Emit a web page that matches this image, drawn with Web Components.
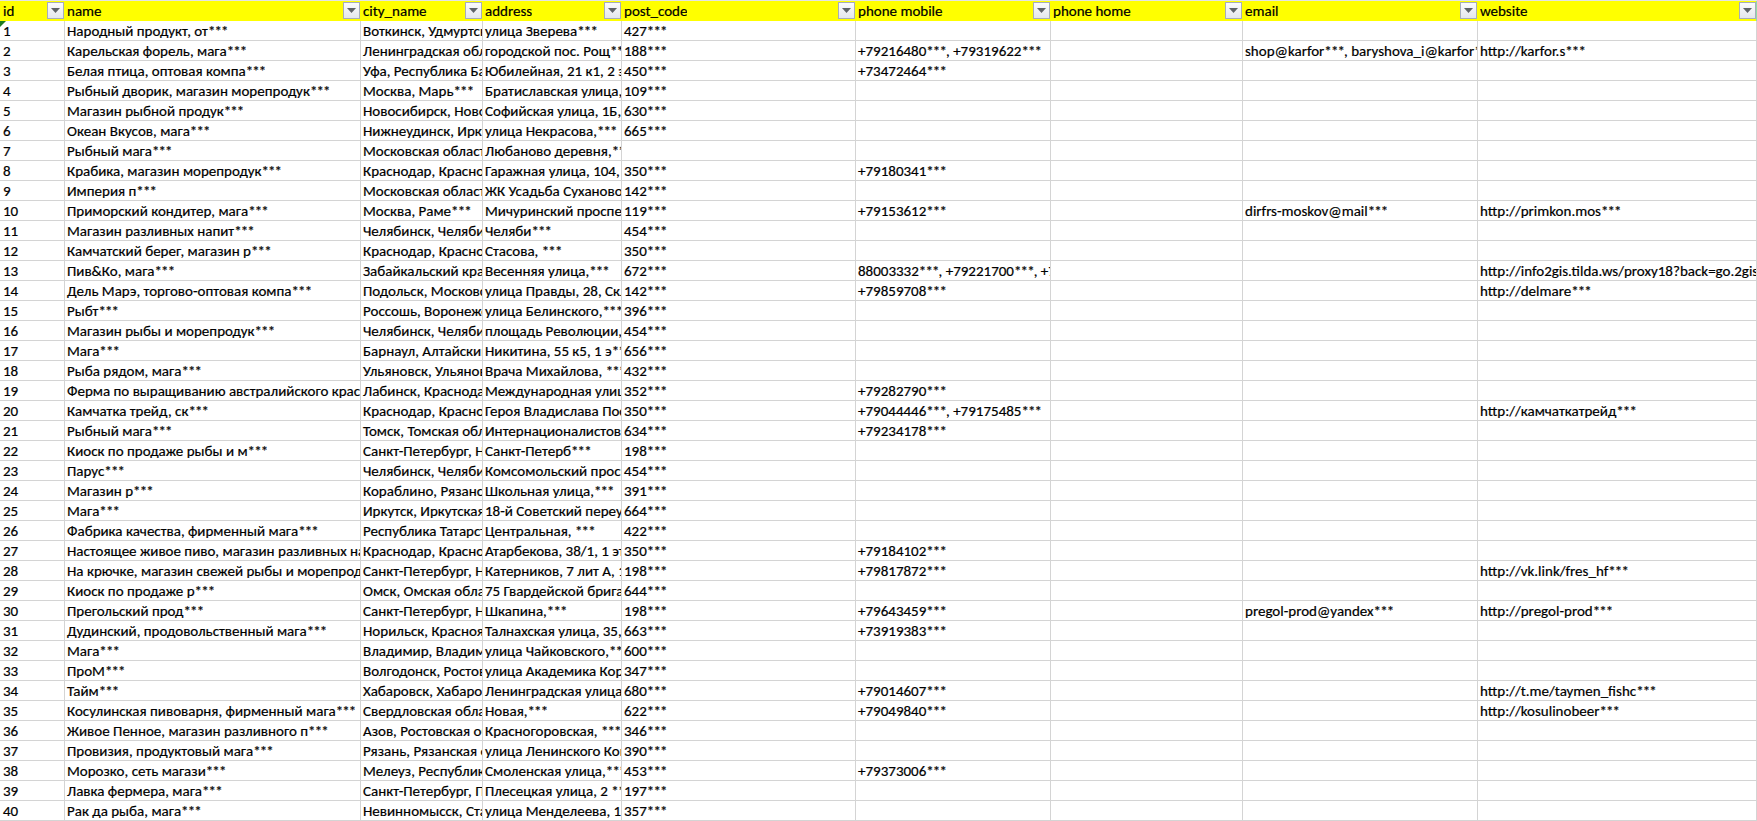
<!doctype html>
<html lang="ru">
<head>
<meta charset="utf-8">
<title>Sheet</title>
<style>
  html, body { margin: 0; height: 100%; overflow: hidden; background: #fff; }
  x-sheet { --cols: 65px 296px 122px 139px 234px 195px 192px 235px 1fr; }
  /* carlito's asterisks run wider than the ones in the screenshot */
  .mask { letter-spacing: -0.9px; }
</style>
</head>
<body>
<x-sheet></x-sheet>
<script>
const HEADERS = ['id', 'name', 'city_name', 'address', 'post_code', 'phone mobile', 'phone home', 'email', 'website'];

const ROWS = [
  ['Народный продукт, от***', 'Воткинск, Удмуртская', 'улица Зверева***', '427***'],
  ['Карельская форель, мага***', 'Ленинградская область', 'городской пос. Рощ***', '188***', '+79216480***, +79319622***', '', 'shop@karfor***, baryshova_i@karfor***', 'http://karfor.s***'],
  ['Белая птица, оптовая компа***', 'Уфа, Республика Башкортостан', 'Юбилейная, 21 к1, 2 этаж', '450***', '+73472464***'],
  ['Рыбный дворик, магазин морепродук***', 'Москва, Марь***', 'Братиславская улица,', '109***'],
  ['Магазин рыбной продук***', 'Новосибирск, Новосибирская', 'Софийская улица, 1Б,', '630***'],
  ['Океан Вкусов, мага***', 'Нижнеудинск, Иркутская', 'улица Некрасова,***', '665***'],
  ['Рыбный мага***', 'Московская область', 'Любаново деревня,***', ''],
  ['Крабика, магазин морепродук***', 'Краснодар, Краснодарский', 'Гаражная улица, 104,', '350***', '+79180341***'],
  ['Империя п***', 'Московская область', 'ЖК Усадьба Суханово', '142***'],
  ['Приморский кондитер, мага***', 'Москва, Раме***', 'Мичуринский проспект', '119***', '+79153612***', '', 'dirfrs-moskov@mail***', 'http://primkon.mos***'],
  ['Магазин разливных напит***', 'Челябинск, Челябинская', 'Челяби***', '454***'],
  ['Камчатский берег, магазин р***', 'Краснодар, Краснодарский', 'Стасова, ***', '350***'],
  ['Пив&Ко, мага***', 'Забайкальский край', 'Весенняя улица,***', '672***', '88003332***, +79221700***, +73***', '', '', 'http://info2gis.tilda.ws/proxy18?back=go.2gis.com'],
  ['Дель Марэ, торгово-оптовая компа***', 'Подольск, Московская', 'улица Правды, 28, Склад', '142***', '+79859708***', '', '', 'http://delmare***'],
  ['Рыбт***', 'Россошь, Воронежская', 'улица Белинского,***', '396***'],
  ['Магазин рыбы и морепродук***', 'Челябинск, Челябинская', 'площадь Революции,', '454***'],
  ['Мага***', 'Барнаул, Алтайский', 'Никитина, 55 к5, 1 э***', '656***'],
  ['Рыба рядом, мага***', 'Ульяновск, Ульяновская', 'Врача Михайлова, ***', '432***'],
  ['Ферма по выращиванию австралийского красного', 'Лабинск, Краснодарский', 'Международная улица', '352***', '+79282790***'],
  ['Камчатка трейд, ск***', 'Краснодар, Краснодарский', 'Героя Владислава Посадского', '350***', '+79044446***, +79175485***', '', '', 'http://камчаткатрейд***'],
  ['Рыбный мага***', 'Томск, Томская область', 'Интернационалистов', '634***', '+79234178***'],
  ['Киоск по продаже рыбы и м***', 'Санкт-Петербург, Невский', 'Санкт-Петерб***', '198***'],
  ['Парус***', 'Челябинск, Челябинская', 'Комсомольский проспект', '454***'],
  ['Магазин р***', 'Кораблино, Рязанская', 'Школьная улица,***', '391***'],
  ['Мага***', 'Иркутск, Иркутская', '18-й Советский переулок', '664***'],
  ['Фабрика качества, фирменный мага***', 'Республика Татарстан', 'Центральная, ***', '422***'],
  ['Настоящее живое пиво, магазин разливных напитков', 'Краснодар, Краснодарский', 'Атарбекова, 38/1, 1 этаж', '350***', '+79184102***'],
  ['На крючке, магазин свежей рыбы и морепродуктов', 'Санкт-Петербург, Невский', 'Катерников, 7 лит А, 1', '198***', '+79817872***', '', '', 'http://vk.link/fres_hf***'],
  ['Киоск по продаже р***', 'Омск, Омская область', '75 Гвардейской бригады', '644***'],
  ['Прегольский прод***', 'Санкт-Петербург, Невский', 'Шкапина,***', '198***', '+79643459***', '', 'pregol-prod@yandex***', 'http://pregol-prod***'],
  ['Дудинский, продовольственный мага***', 'Норильск, Красноярский', 'Талнахская улица, 35,', '663***', '+73919383***'],
  ['Мага***', 'Владимир, Владимирская', 'улица Чайковского,***', '600***'],
  ['ПроМ***', 'Волгодонск, Ростовская', 'улица Академика Королева', '347***'],
  ['Тайм***', 'Хабаровск, Хабаровский', 'Ленинградская улица', '680***', '+79014607***', '', '', 'http://t.me/taymen_fishc***'],
  ['Косулинская пивоварня, фирменный мага***', 'Свердловская область', 'Новая,***', '622***', '+79049840***', '', '', 'http://kosulinobeer***'],
  ['Живое Пенное, магазин разливного п***', 'Азов, Ростовская область', 'Красногоровская, ***', '346***'],
  ['Провизия, продуктовый мага***', 'Рязань, Рязанская область', 'улица Ленинского Комсомола', '390***'],
  ['Морозко, сеть магази***', 'Мелеуз, Республика', 'Смоленская улица,***', '453***', '+79373006***'],
  ['Лавка фермера, мага***', 'Санкт-Петербург, Пушкин', 'Плесецкая улица, 2 ***', '197***'],
  ['Рак да рыба, мага***', 'Невинномысск, Ставропольский', 'улица Менделеева, 1', '357***'],
];

class XFilter extends HTMLElement {
  constructor() {
    super();
    this.attachShadow({ mode: 'open' });
    this.shadowRoot.innerHTML = `
      <style>
        :host {
          display: block;
          box-sizing: border-box;
          flex: none;
          width: 17px;
          height: 17px;
          border: 1px solid #a6adba;
          background: linear-gradient(#fbfbfc, #e4e7ec);
        }
        svg { display: block; margin: 5px 0 0 3px; }
      </style>
      <svg width="9" height="5" viewBox="0 0 9 5"><path d="M0 0h9L4.5 5z" fill="#5f6368"/></svg>
    `;
  }
}

class XHeadCell extends HTMLElement {
  constructor() {
    super();
    this.attachShadow({ mode: 'open' });
    this.shadowRoot.innerHTML = `
      <style>
        :host {
          display: flex;
          align-items: center;
          justify-content: space-between;
          min-width: 0;
          height: 20px;
          padding: 0 1px 1px 2px;
          box-sizing: border-box;
          background: #ffff00;
        }
        :host(:first-child) { padding-left: 3px; }
        :host(:last-child) { padding-right: 0; border-right: 1px solid #8fdca8; }
        .label { padding-top: 1px; line-height: 19px; white-space: nowrap; overflow: hidden; }
      </style>
      <span class="label"><slot></slot></span>
      <x-filter></x-filter>
    `;
  }
}

class XCell extends HTMLElement {
  constructor() {
    super();
    this.attachShadow({ mode: 'open' });
    this.shadowRoot.innerHTML = `
      <style>
        :host {
          display: block;
          min-width: 0;
          height: 20px;
          padding-left: 2px;
          box-sizing: border-box;
          border-right: 1px solid #d4d4d4;
          border-bottom: 1px solid #d4d4d4;
          line-height: 21px;
          white-space: nowrap;
          overflow: hidden;
        }
        :host(:first-child) { padding-left: 3px; }
      </style>
      <slot></slot>
    `;
  }

  set text(v) {
    v.split(/(\*+)/).forEach((part) => {
      if (!part) return;
      if (part[0] === '*') {
        const s = document.createElement('span');
        s.className = 'mask';
        s.textContent = part;
        this.append(s);
      } else {
        this.append(part);
      }
    });
  }
}

class XRow extends HTMLElement {
  constructor() {
    super();
    this.attachShadow({ mode: 'open' });
    this.shadowRoot.innerHTML = `
      <style>
        :host {
          display: grid;
          grid-template-columns: var(--cols);
        }
      </style>
      <slot></slot>
    `;
  }
}

class XSheet extends HTMLElement {
  constructor() {
    super();
    this.attachShadow({ mode: 'open' });
    this.shadowRoot.innerHTML = `
      <style>
        :host {
          display: block;
          position: relative;
          font-family: Carlito, Lato, "Liberation Sans", sans-serif;
          font-size: 15px;
          color: #000;
          -webkit-text-stroke: 0.2px #000;
          border-top: 1px solid #e4e4e4;
        }
        /* excel's "number stored as text" marker on the first cell */
        .marker {
          position: absolute;
          left: 0;
          top: 20px;
          width: 0;
          height: 0;
          border-top: 6px solid #1f7a1f;
          border-right: 6px solid transparent;
        }
      </style>
      <slot></slot>
      <div class="marker"></div>
    `;
  }

  connectedCallback() {
    const head = document.createElement('x-row');
    HEADERS.forEach((h) => {
      const c = document.createElement('x-head-cell');
      c.textContent = h;
      head.append(c);
    });
    this.append(head);

    ROWS.forEach((fields, i) => {
      const row = document.createElement('x-row');
      [String(i + 1), ...fields].forEach((v) => {
        const c = document.createElement('x-cell');
        c.text = v;
        row.append(c);
      });
      for (let n = fields.length + 1; n < HEADERS.length; n++) {
        row.append(document.createElement('x-cell'));
      }
      this.append(row);
    });
  }
}

customElements.define('x-filter', XFilter);
customElements.define('x-head-cell', XHeadCell);
customElements.define('x-cell', XCell);
customElements.define('x-row', XRow);
customElements.define('x-sheet', XSheet);
</script>
</body>
</html>
